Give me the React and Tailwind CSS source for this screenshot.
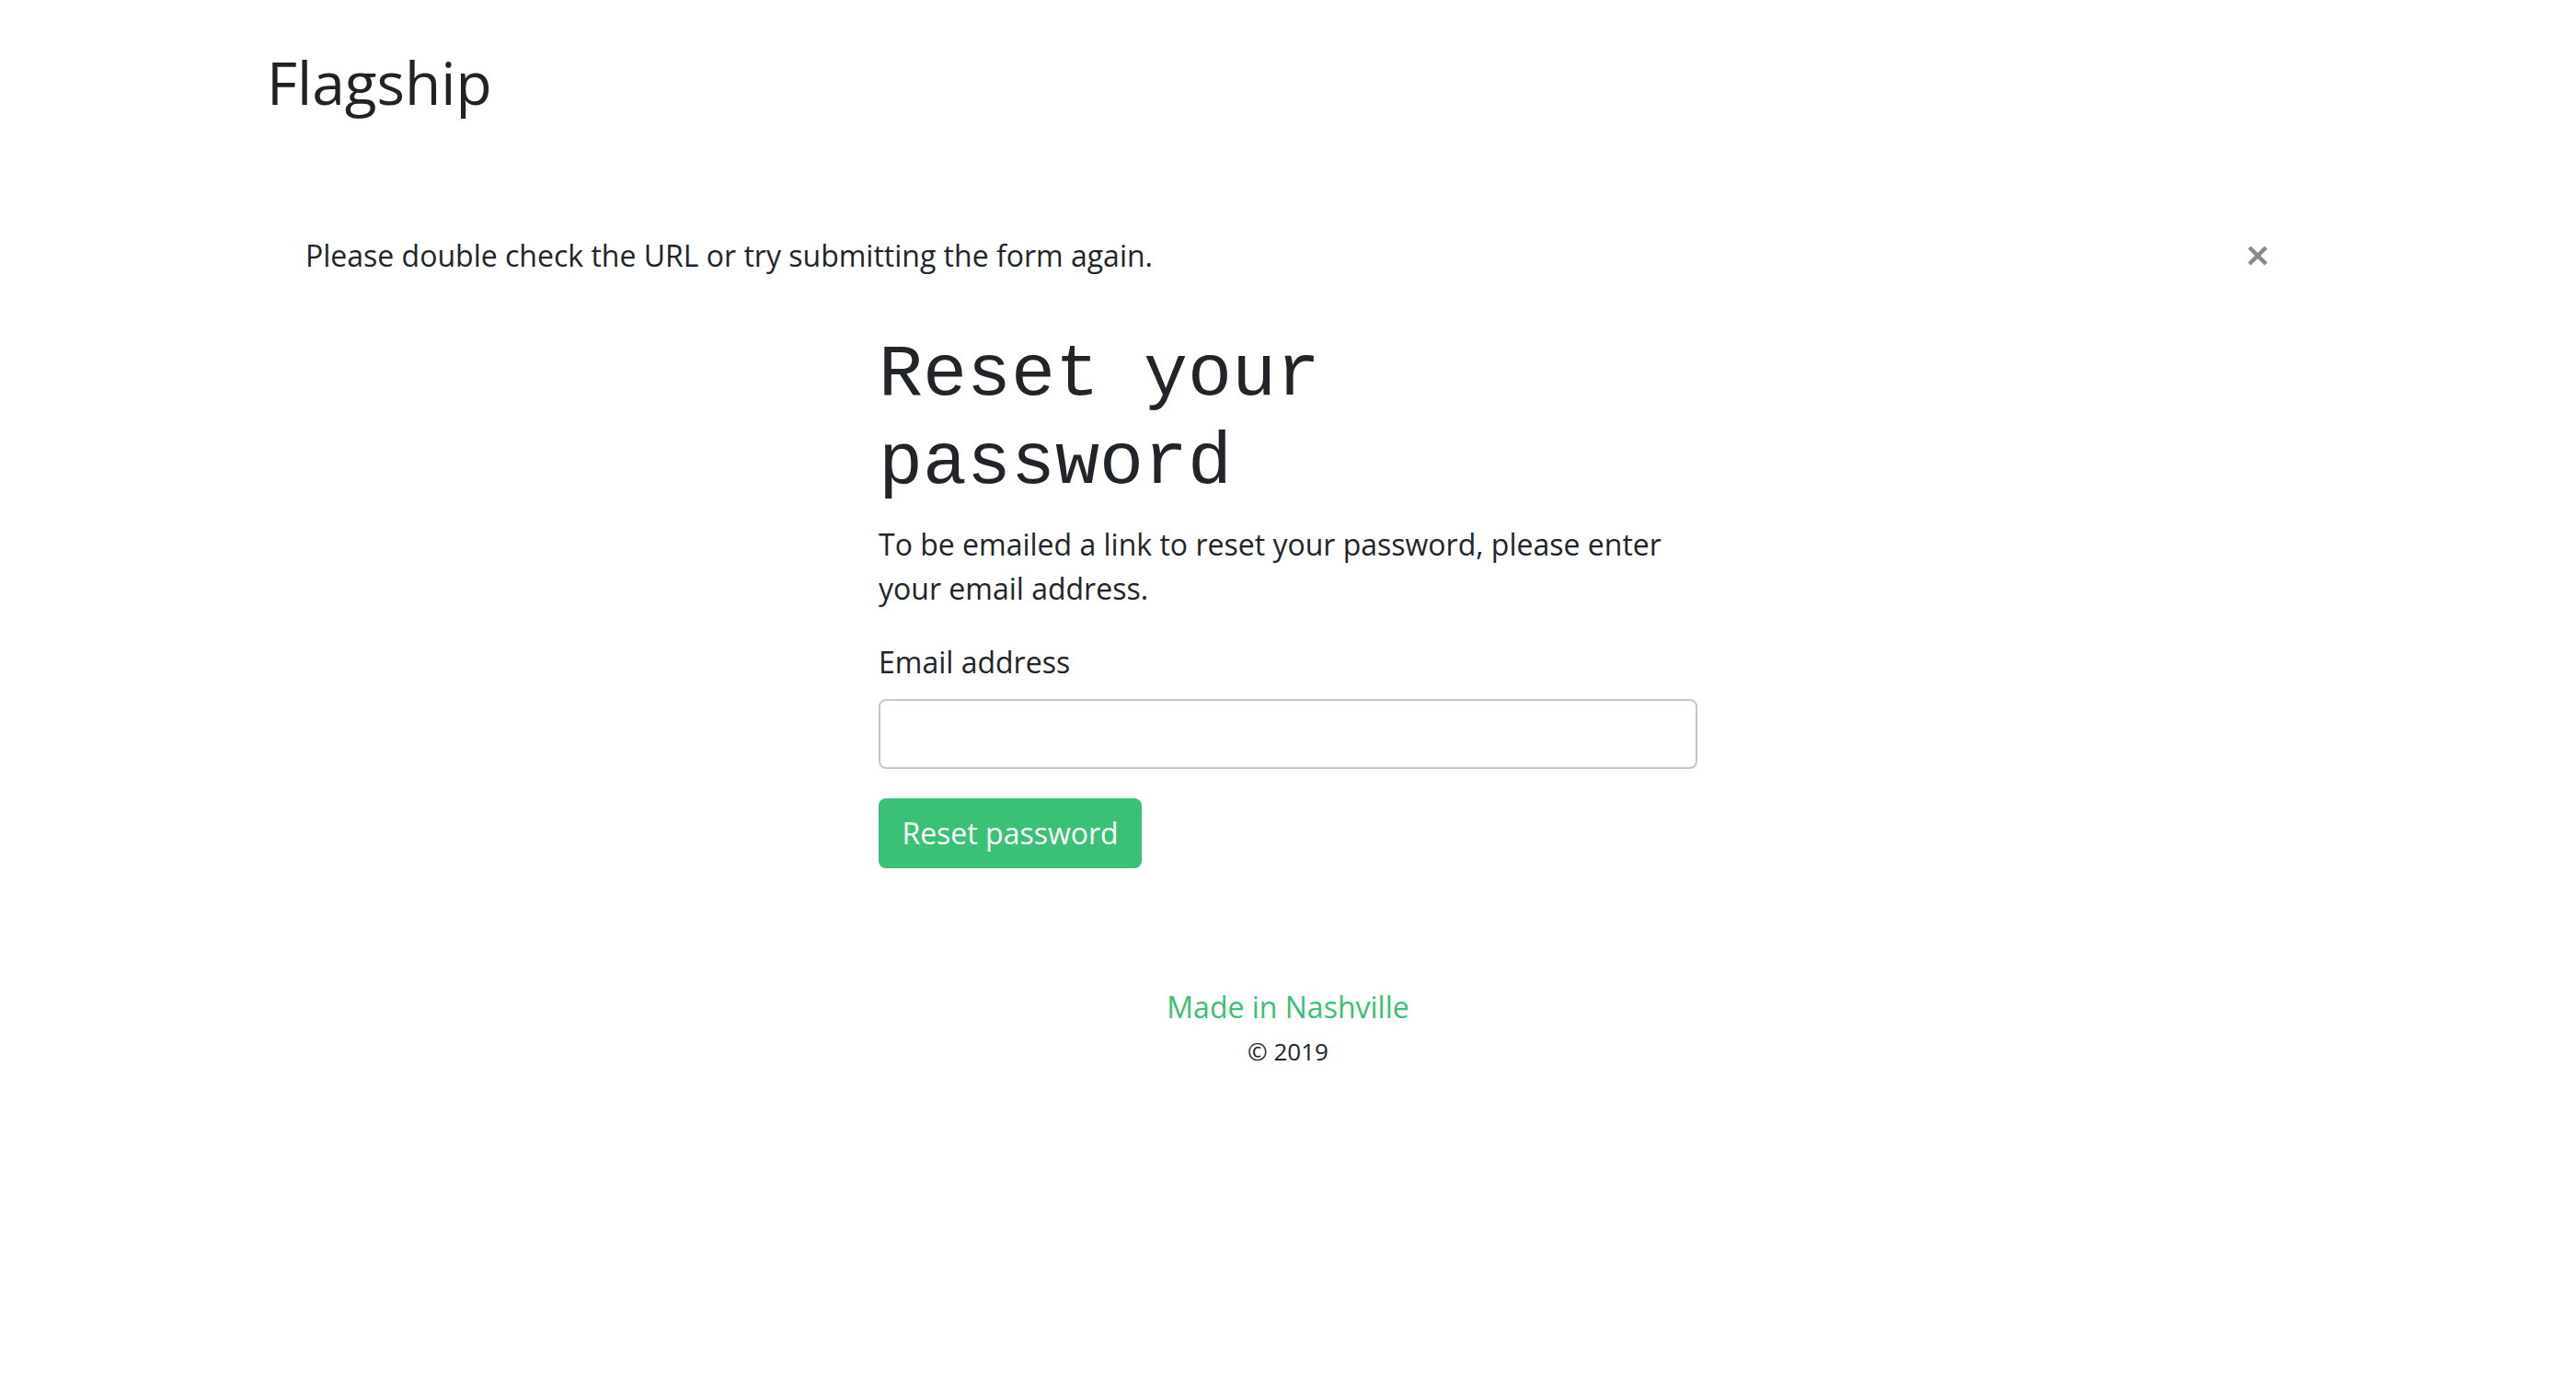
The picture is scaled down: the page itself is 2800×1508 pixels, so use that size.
export default function App() {
  return (
    <div className="min-h-screen bg-white text-[#212529] font-['Open_Sans',sans-serif]">
      <div className="mx-auto w-[2280px] px-[30px]">
        {/* Navbar */}
        <header className="pt-[42px]">
          <a href="#" className="block text-[64px] leading-[96px] text-[#222222]">Flagship</a>
        </header>

        {/* Alert */}
        <div className="mt-[92px] flex items-center justify-between py-[24px] pl-[42px] pr-[40px]">
          <p className="text-[32px] leading-[48px]">Please double check the URL or try submitting the form again.</p>
          <button className="mr-[5px] text-[#888888]" aria-label="Close">
            <svg width="22" height="22" viewBox="0 0 22 22" fill="none" stroke="currentColor" strokeWidth="4.5">
              <path d="M2 2L20 20M20 2L2 20" />
            </svg>
          </button>
        </div>

        {/* Form */}
        <div className="mx-auto mt-[34px] w-[890px]">
          <h1 className="mb-[16px] text-[80px] leading-[96px] font-['Liberation_Mono',monospace]">Reset your password</h1>
          <p className="mb-[32px] text-[32px] leading-[48px]">
            To be emailed a link to reset your password, please enter your email address.
          </p>
          <label className="mb-[16px] block text-[32px] leading-[48px]">Email address</label>
          <input
            type="email"
            className="mb-[32px] block h-[76px] w-full rounded-[8px] border-2 border-[#c4c5ce] px-[24px] text-[32px] outline-none"
          />
          <button className="flex h-[76px] w-[286px] items-center justify-center rounded-[8px] bg-[#3bc176] text-[32px] text-white">
            Reset password
          </button>
        </div>

        {/* Footer */}
        <footer className="mt-[127px] text-center">
          <a href="#" className="block text-[32px] leading-[48px] text-[#3bbf74]">Made in Nashville</a>
          <p className="mt-[5px] text-[26px] leading-[39px]">© 2019</p>
        </footer>
      </div>
    </div>
  )
}
